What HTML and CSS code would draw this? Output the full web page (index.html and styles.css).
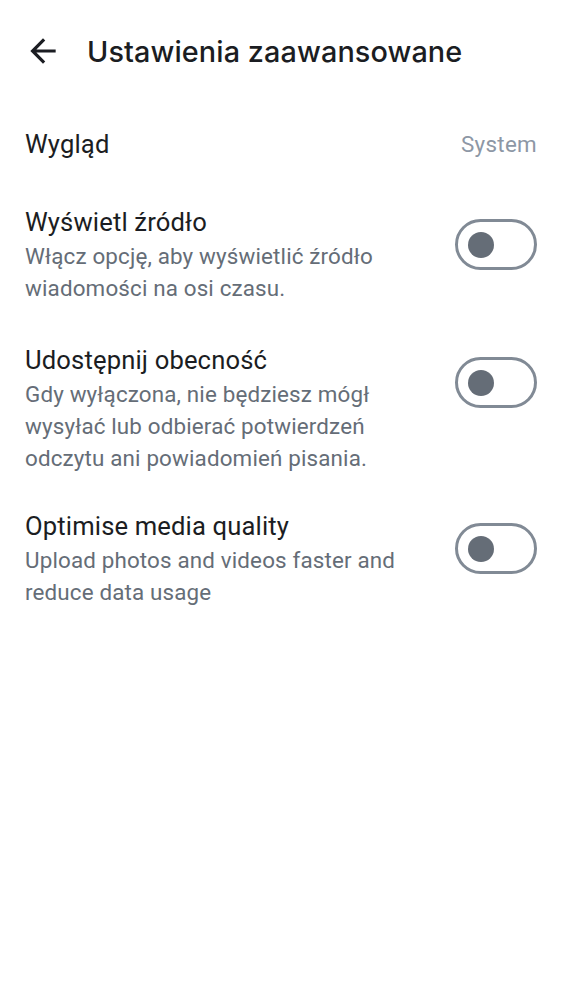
FILE: index.html
```html
<!DOCTYPE html>
<html lang="pl">
<head>
<meta charset="utf-8">
<title>Ustawienia zaawansowane</title>
<link rel="stylesheet" href="styles.css">
</head>
<body>
<header class="topbar">
  <button class="back" aria-label="Wstecz">
    <svg viewBox="0 0 24 24" width="38" height="38"><path d="M20 11H7.83l5.59-5.59L12 4l-8 8 8 8 1.41-1.41L7.83 13H20v-2z" fill="#1b1d22"/></svg>
  </button>
  <h1 class="title">Ustawienia zaawansowane</h1>
</header>
<main class="list">
  <div class="row row-first">
    <div class="label">Wygląd</div>
    <div class="value">System</div>
  </div>
  <div class="row row-toggle row-2">
    <div class="texts">
      <div class="label">Wyświetl źródło</div>
      <div class="desc">Włącz opcję, aby wyświetlić źródło wiadomości na osi czasu.</div>
    </div>
    <div class="switch"><span class="thumb"></span></div>
  </div>
  <div class="row row-toggle row-3">
    <div class="texts">
      <div class="label">Udostępnij obecność</div>
      <div class="desc">Gdy wyłączona, nie będziesz mógł wysyłać lub odbierać potwierdzeń odczytu ani powiadomień pisania.</div>
    </div>
    <div class="switch"><span class="thumb"></span></div>
  </div>
  <div class="row row-toggle row-4">
    <div class="texts">
      <div class="label">Optimise media quality</div>
      <div class="desc">Upload photos and videos faster and reduce data usage</div>
    </div>
    <div class="switch"><span class="thumb"></span></div>
  </div>
</main>
</body>
</html>
```

FILE: styles.css
```css
* { box-sizing: border-box; }
html, body { margin: 0; padding: 0; background: #ffffff; }
body {
  font-family: Roboto, "Noto Sans", sans-serif;
  color: #1b1d22;
  width: 562px;
}
.topbar {
  height: 102px;
  display: flex;
  align-items: center;
  padding-left: 24px;
}
.back {
  width: 38px;
  height: 38px;
  padding: 0;
  border: 0;
  background: none;
  display: flex;
  align-items: center;
  justify-content: center;
}
.back svg { display: block; }
.title {
  margin: 0 0 0 25px;
  font-family: Inter, Roboto, sans-serif;
  font-weight: 500;
  font-size: 28.8px;
  letter-spacing: 0.1px;
  color: #1b1d22;
}
.list {
  display: flex;
  flex-direction: column;
}
.row {
  display: flex;
  padding: 0 25px;
}
.row-first {
  margin-top: 23px;
  align-items: center;
  justify-content: space-between;
}
.row-2 { margin-top: 41px; }
.row-3 { margin-top: 38px; }
.row-4 { margin-top: 34px; }
.row-toggle { align-items: flex-start; gap: 24px; }
.texts { flex: 1; min-width: 0; }
.label {
  font-size: 25.6px;
  line-height: 38.4px;
  letter-spacing: 0.15px;
  color: #1b1d22;
}
.row-toggle .label { line-height: 36px; }
.value {
  font-size: 22.4px;
  letter-spacing: 0.3px;
  color: #8d97a5;
}
.desc {
  font-size: 22.4px;
  line-height: 32px;
  letter-spacing: 0.15px;
  color: #656d77;
}
.switch {
  flex: none;
  width: 82px;
  height: 51px;
  margin-top: 15px;
  border: 3px solid #818a95;
  border-radius: 26px;
  display: flex;
  align-items: center;
  padding-left: 10px;
}
.thumb {
  width: 26px;
  height: 26px;
  border-radius: 50%;
  background: #656d77;
}
```
